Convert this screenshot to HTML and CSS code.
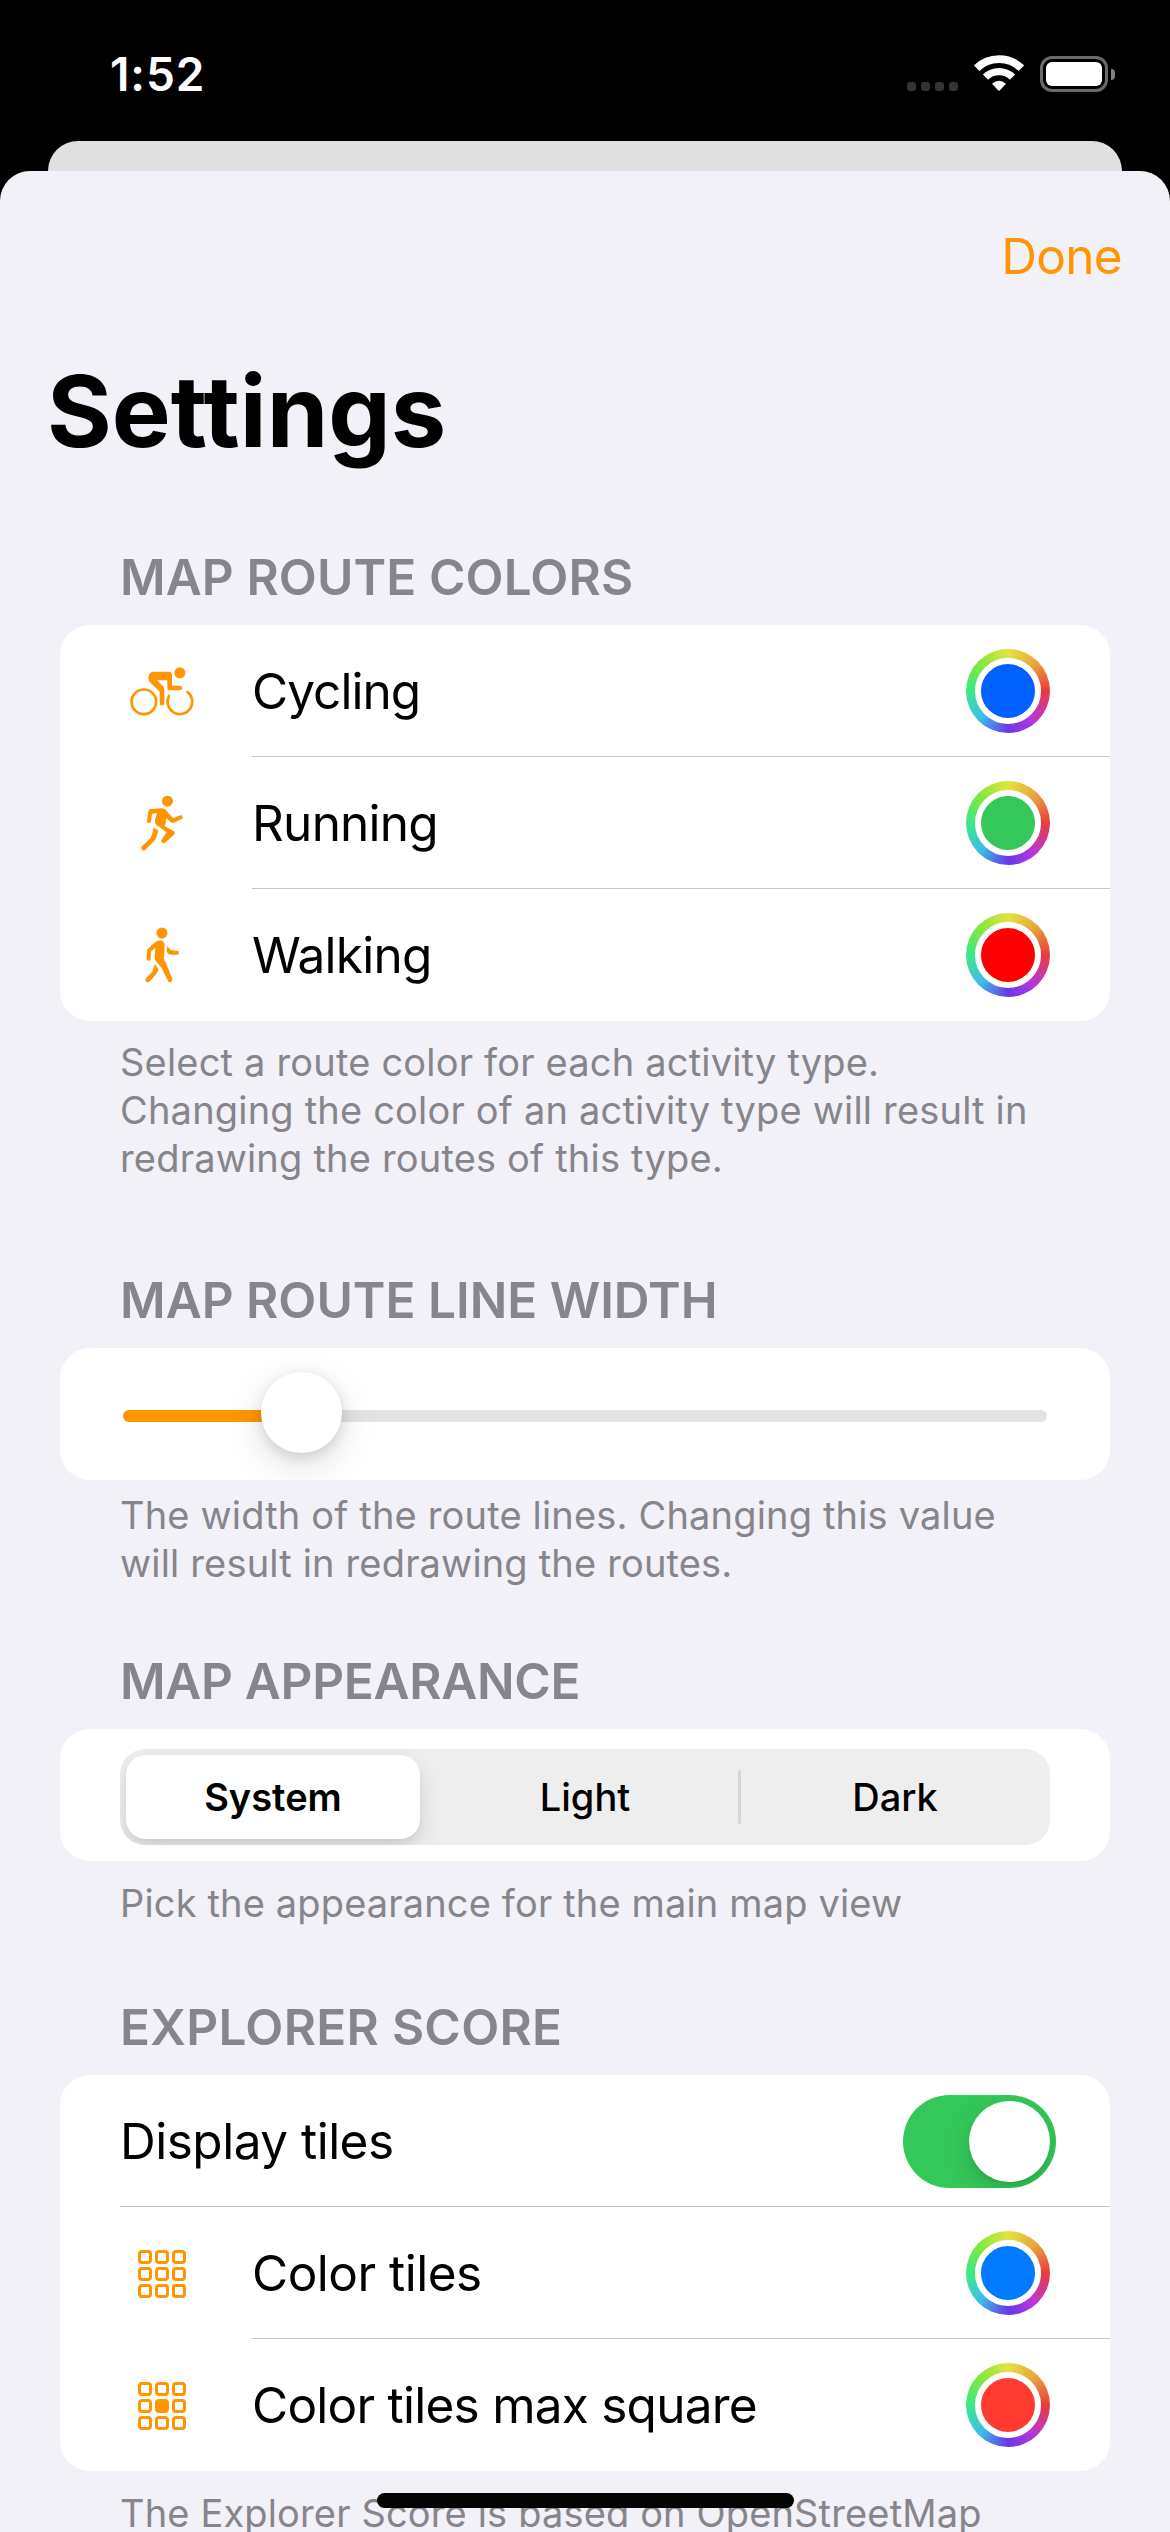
FILE: index.html
```html
<!DOCTYPE html>
<html lang="en">
<head>
<meta charset="utf-8">
<title>Settings</title>
<link rel="stylesheet" href="styles.css">
</head>
<body>
<div class="screen">
  <header class="status">
    <time class="clock">1:52</time>
    <div class="indicators">
      <div class="cellular"><i></i><i></i><i></i><i></i></div>
      <svg class="wifi" viewBox="222 45 150 108" aria-label="Wi-Fi">
        <g fill="none" stroke="#fff">
          <path d="M230 84.5A96.500 96.500 0 0 1 364 84.500" stroke-width="23.500"/>
          <path d="M256.500 111.500A58 58 0 0 1 337.500 111.500" stroke-width="22"/>
        </g>
        <path d="M276 131Q297 113 318 131L299 151.500Q297 153.500 295 151.500Z" fill="#fff"/>
      </svg>
      <div class="battery"><div class="battery-body"><div class="battery-fill"></div></div><div class="battery-nub"></div></div>
    </div>
  </header>
  <div class="backdrop"></div>

  <main class="sheet">
    <nav class="nav"><a class="done">Done</a></nav>
    <h1>Settings</h1>

    <section>
      <h2>MAP ROUTE COLORS</h2>
      <div class="card">
        <div class="row">
          <div class="icon">
            <svg width="64" height="49" viewBox="59 83 192 147" fill="#ff9500">
              <circle cx="100.500" cy="187.500" r="37" fill="none" stroke="#ff9500" stroke-width="8"/>
              <path d="M231.500 158A37 37 0 1 1 176 170" fill="none" stroke="#ff9500" stroke-width="8" stroke-linecap="round"/>
              <circle cx="208.500" cy="100.500" r="16.500"/>
              <path d="M130 97H175Q185 97 185 107V139H208a7 7 0 0 1 0 14H179Q171 153 171 145V123H140L158 141Q162 146 162 151V192a7 7 0 0 1-14 0V157L119 129Q111 119 116 106Q120 97 130 97Z"/>
            </svg>
          </div>
          <div class="row-main"><span class="label tight">Cycling</span><span class="swatch blue"></span></div>
        </div>
        <div class="row">
          <div class="icon">
            <svg width="44" height="56" viewBox="90 466 132 168" fill="#ff9500">
              <circle cx="172.500" cy="484.500" r="16.500"/>
              <path d="M122 508Q116 509 115 515L111 543a6 6 0 0 0 12 2L126 522L141 521Q134 540 135 549Q137 556 145 560L170 578L156 598a7 7 0 0 0 9 11L192 585Q197 579 191 574L165 560L169 535L181 546Q186 551 191 549L215 538a6 6 0 0 0-4-11L189 536L173 517Q165 506 155 506Z"/>
              <path d="M131 563L145 573Q138 600 132 605L106 630a7 7 0 0 1-10-10L121 596Q127 585 131 563Z"/>
            </svg>
          </div>
          <div class="row-main"><span class="label">Running</span><span class="swatch green"></span></div>
        </div>
        <div class="row">
          <div class="icon">
            <svg width="34" height="56" viewBox="106 862 102 168" fill="#ff9500">
              <circle cx="157" cy="880" r="16.500"/>
              <path d="M148 903Q156 901 161 906Q166 911 165 918L163 954Q163 961 168 968L187 1016a7 7 0 0 1-12 8L156 985L138 964Q134 957 135 950L137 925L124 935L123 957a6 6 0 0 1-12 0L112 933Q113 929 117 925L136 908Q142 904 148 903Z"/>
              <path d="M172 920L184 932L202 933a6 6 0 0 1 0 12H183Q173 943 171 934Z"/>
              <path d="M135 973L147 989Q143 998 138 1005L120 1025a7 7 0 0 1-11-9L128 996Z"/>
            </svg>
          </div>
          <div class="row-main"><span class="label">Walking</span><span class="swatch red"></span></div>
        </div>
      </div>
      <p class="note wide">Select a route color for each activity type.<br>Changing the color of an activity type will result in<br>redrawing the routes of this type.</p>
    </section>

    <section class="gap-large">
      <h2 class="even">MAP ROUTE LINE WIDTH</h2>
      <div class="card slider">
        <div class="track"><div class="progress"></div></div>
        <div class="thumb"></div>
      </div>
      <p class="note close">The width of the route lines. Changing this value<br>will result in redrawing the routes.</p>
    </section>

    <section class="gap-small">
      <h2 class="narrow">MAP APPEARANCE</h2>
      <div class="card picker">
        <div class="segments">
          <div class="segment"><span class="selected">System</span></div>
          <div class="segment">Light</div>
          <div class="segment divided">Dark</div>
        </div>
      </div>
      <p class="note">Pick the appearance for the main map view</p>
    </section>

    <section class="gap-medium">
      <h2 class="spaced">EXPLORER SCORE</h2>
      <div class="card">
        <div class="row plain">
          <div class="row-main"><span class="label loose">Display tiles</span><span class="toggle"><span class="knob"></span></span></div>
        </div>
        <div class="row">
          <div class="icon"><div class="grid"><i></i><i></i><i></i><i></i><i></i><i></i><i></i><i></i><i></i></div></div>
          <div class="row-main"><span class="label loose">Color tiles</span><span class="swatch azure"></span></div>
        </div>
        <div class="row">
          <div class="icon"><div class="grid"><i></i><i></i><i></i><i></i><i class="full"></i><i></i><i></i><i></i><i></i></div></div>
          <div class="row-main"><span class="label">Color tiles max square</span><span class="swatch coral"></span></div>
        </div>
      </div>
      <p class="note">The Explorer Score is based on OpenStreetMap</p>
    </section>
  </main>
  <div class="home-indicator"></div>
</div>
</body>
</html>
```
FILE: styles.css
```css
* { box-sizing: border-box; }

body {
  margin: 0;
  background: #000;
  color: #000;
  font-family: Inter, "Liberation Sans", sans-serif;
}

h1, h2, p { margin: 0; }

.screen {
  position: relative;
  display: flex;
  flex-direction: column;
  width: 1170px;
  height: 2532px;
  overflow: hidden;
  background: #000;
}

/* Status bar */
.status {
  flex: none;
  display: flex;
  justify-content: space-between;
  height: 141px;
  padding: 44px 55px 0 110px;
  color: #fff;
}
.clock {
  font-size: 46px;
  font-weight: 600;
  line-height: 60px;
  letter-spacing: 0.9px;
}
.indicators { display: flex; height: 60px; }
.cellular { display: flex; gap: 5px; margin: 38px 16px 0 0; }
.cellular i { width: 9px; height: 9px; border-radius: 3px; background: #333; }
.wifi { width: 50px; height: 36px; margin: 11px 16px 0 0; }
.battery { display: flex; align-items: center; gap: 3px; height: 36px; margin-top: 12px; }
.battery-body { width: 68px; height: 36px; padding: 3px; border: 3px solid #6a6a6a; border-radius: 12px; }
.battery-fill { height: 24px; border-radius: 6px; background: #fff; }
.battery-nub { width: 4px; height: 11px; border-radius: 0 5px 5px 0; background: #808080; }

/* Sheets */
.backdrop {
  flex: none;
  height: 60px;
  margin: 0 48px -30px;
  border-radius: 30px 30px 0 0;
  background: #e0e0e0;
}
.sheet {
  flex: 1;
  min-height: 0;
  position: relative;
  padding: 0 60px;
  border-radius: 30px 30px 0 0;
  background: #f2f1f7;
}
.nav {
  display: flex;
  align-items: center;
  justify-content: flex-end;
  height: 170px;
  margin-right: -12px;
}
.done { color: #ff9500; font-size: 49.5px; line-height: 60px; letter-spacing: -0.7px; }
h1 {
  margin: 10px 0 76px -13px;
  font-size: 99px;
  font-weight: 700;
  line-height: 120px;
}

/* Sections */
h2 {
  height: 78px;
  padding-left: 60px;
  color: #86858b;
  font-size: 49.5px;
  font-weight: 600;
  line-height: 60px;
  letter-spacing: 0.1px;
  white-space: nowrap;
}
h2.even { letter-spacing: 0; }
h2.narrow { letter-spacing: -0.3px; }
h2.spaced { letter-spacing: 0.3px; }
.gap-large { margin-top: 88px; }
.gap-medium { margin-top: 70px; }
.gap-small { margin-top: 64px; }

.card { border-radius: 30px; background: #fff; overflow: hidden; }
.note {
  padding: 18px 0 0 60px;
  color: #86858b;
  font-size: 38px;
  line-height: 48px;
  letter-spacing: 0.15px;
  white-space: nowrap;
}
.note.wide { padding-top: 17px; letter-spacing: 0.19px; }
.note.close { padding-top: 11px; letter-spacing: 0.17px; }

/* Rows */
.row { display: flex; height: 132px; padding-left: 60px; }
.icon {
  display: flex;
  align-items: center;
  justify-content: center;
  width: 84px;
  margin-right: 48px;
}
.row-main {
  flex: 1;
  display: flex;
  align-items: center;
  justify-content: space-between;
  padding: 1px 60px 0 0;
  border-bottom: 1px solid #c6c6c8;
}
.row:last-child .row-main { border-bottom: 0; padding-top: 0; }
.label { font-size: 49.5px; line-height: 60px; letter-spacing: -0.75px; white-space: nowrap; }
.label.tight { letter-spacing: -0.95px; }
.label.loose { letter-spacing: -0.5px; }

/* Color wells */
.swatch {
  display: flex;
  width: 84px;
  height: 84px;
  padding: 9px;
  border-radius: 50%;
  background: conic-gradient(#e4e342, #e8a33c 45deg, #e83c3c 90deg, #b835dc 140deg, #6838e8 180deg, #3cbfe8 225deg, #3ce886 270deg, #84e83c 315deg, #e4e342);
}
.swatch::before { content: ""; flex: 1; border: 6px solid #fff; border-radius: 50%; background: var(--fill); }
.blue { --fill: #0061fe; }
.green { --fill: #34c759; }
.red { --fill: #ff0000; }
.azure { --fill: #007aff; }
.coral { --fill: #ff3b30; }

/* Slider */
.slider { display: grid; align-items: center; height: 132px; padding: 0 63px; }
.slider > * { grid-area: 1 / 1; }
.track { height: 12px; margin-top: 4px; border-radius: 6px; background: #e3e3e5; overflow: hidden; }
.progress { width: 178px; height: 12px; background: #ff9500; }
.thumb {
  width: 81px;
  height: 81px;
  margin: 0 0 3px 138px;
  border-radius: 50%;
  background: #fff;
  box-shadow: 0 12px 36px rgba(0, 0, 0, 0.13), 0 4px 14px rgba(0, 0, 0, 0.12);
}

/* Segmented control */
.picker { height: 132px; padding: 20px 60px 16px; }
.segments { display: flex; height: 96px; border-radius: 25px; background: #eeeeef; overflow: hidden; }
.segment {
  flex: 1;
  position: relative;
  display: flex;
  align-items: center;
  justify-content: center;
  font-size: 38px;
  font-weight: 500;
  line-height: 48px;
}
.selected {
  flex: 1;
  margin: 6px 10px 6px 6px;
  border-radius: 20px;
  background: #fff;
  font-weight: 600;
  line-height: 84px;
  text-align: center;
  box-shadow: 0 9px 24px rgba(0, 0, 0, 0.12), 0 6px 6px rgba(0, 0, 0, 0.04);
}
.divided::before {
  content: "";
  position: absolute;
  left: -2px;
  width: 3px;
  height: 54px;
  border-radius: 2px;
  background: #d5d5d6;
}

/* Toggle */
.toggle {
  display: flex;
  justify-content: flex-end;
  width: 153px;
  height: 93px;
  margin: 1px -6px 0 0;
  padding: 6px;
  border-radius: 47px;
  background: #34c759;
  overflow: hidden;
}
.knob { width: 81px; height: 81px; border-radius: 50%; background: #fff; box-shadow: 0 9px 24px rgba(0, 0, 0, 0.15), 0 3px 3px rgba(0, 0, 0, 0.06); }

/* Tile grid icon */
.grid { display: grid; grid-template-columns: repeat(3, 14px); gap: 3px 3.4px; padding-top: 2px; }
.grid i { height: 14px; border: 3px solid #ff9500; border-radius: 4px; }
.grid .full { background: #ff9500; }

.home-indicator {
  position: absolute;
  left: 377px;
  bottom: 24px;
  width: 417px;
  height: 15px;
  border-radius: 8px;
  background: #040404;
}
```
